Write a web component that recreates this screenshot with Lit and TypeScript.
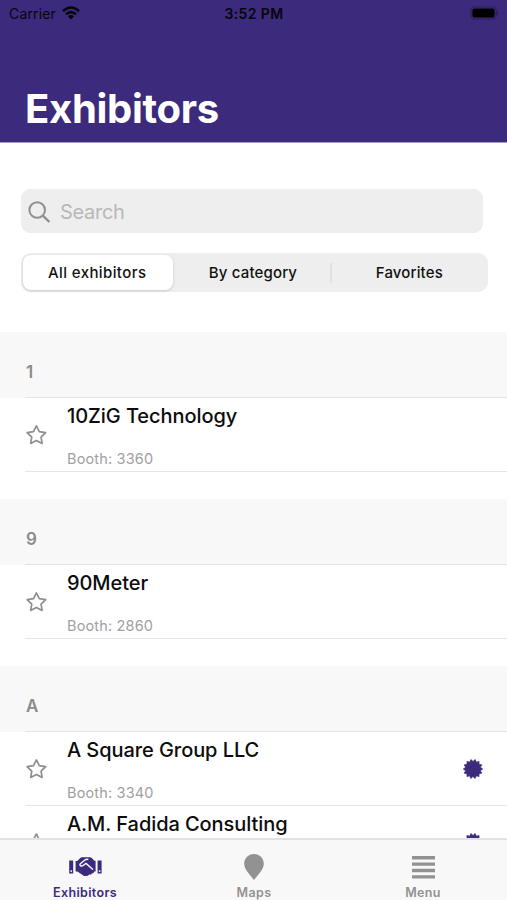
import { LitElement, html, css, svg } from "lit";
import { customElement, property } from "lit/decorators.js";

interface Exhibitor { name: string; booth?: string; featured?: boolean }
interface Group { label: string; items: Exhibitor[] }

const groups: Group[] = [
  { label: "1", items: [{ name: "10ZiG Technology", booth: "3360" }] },
  { label: "9", items: [{ name: "90Meter", booth: "2860" }] },
  {
    label: "A",
    items: [
      { name: "A Square Group LLC", booth: "3340", featured: true },
      { name: "A.M. Fadida Consulting", featured: true },
    ],
  },
];

// Polygon points alternating between two radii, first point straight up.
const burst = (cx: number, cy: number, spikes: number, outer: number, inner: number, turn = 0) =>
  Array.from({ length: spikes * 2 }, (_, i) => {
    const r = i % 2 ? inner : outer;
    const a = (Math.PI * i) / spikes - Math.PI / 2 + turn;
    return `${(cx + r * Math.cos(a)).toFixed(2)},${(cy + r * Math.sin(a)).toFixed(2)}`;
  }).join(" ");

const starPoints = burst(11.4, 11.6, 5, 9.7, 4.9);
const sealPoints = burst(10, 10, 14, 9.7, 7.6, Math.PI / 14);

@customElement("exhibitor-row")
class ExhibitorRow extends LitElement {
  @property({ attribute: false }) item!: Exhibitor;

  static styles = css`
    :host { display: flex; height: 74px; padding-left: 25px; }
    .body { flex: 1; display: flex; border-bottom: 1px solid #e6e6e6; }
    .star { width: 22px; height: 22px; margin: 26px 20px 0 0; }
    .text { flex: 1; display: flex; flex-direction: column; }
    .name { font-size: 20px; line-height: 24px; font-weight: 500; color: #0c0c0c; margin-top: 6px; letter-spacing: -0.07px; white-space: nowrap; }
    .booth { font-size: 14.5px; line-height: 20px; color: #a0a0a0; margin-top: 21px; letter-spacing: 0.16px; }
    .seal { width: 20px; height: 20px; margin: 27px 24px 0 0; }
  `;

  render() {
    const { name, booth, featured } = this.item;
    return html`<div class="body">
      <svg class="star" viewBox="0 0 22 22">
        <polygon points=${starPoints} fill="none" stroke="#8f8f8f" stroke-width="1.7" stroke-linejoin="round" />
      </svg>
      <div class="text">
        <div class="name">${name}</div>
        ${booth ? html`<div class="booth">Booth: ${booth}</div>` : null}
      </div>
      ${featured
        ? html`<svg class="seal" viewBox="0 0 20 20"><polygon points=${sealPoints} fill="#3c2a7c" stroke="#3c2a7c" stroke-width="0.7" stroke-linejoin="round" /></svg>`
        : null}
    </div>`;
  }
}

const handshake = svg`
  <path fill="currentColor" fill-rule="evenodd" d="M.2 3.4H4.2V16.6H.2ZM2.2 13.2a.9 .9 0 1 0 .01 0Z" />
  <path fill="currentColor" fill-rule="evenodd" d="M28.6 3.4H32.6V16.6H28.6ZM30.6 13.2a.9 .9 0 1 0 .01 0Z" />
  <path fill="currentColor" d="M6.6 4H8.3L11.2 .9Q12 .2 13.2 .2H20.8Q22 .2 22.8 1L25.3 3.8H26.6V14.6H25.2Q24.8 16.6 22.8 16.5Q21.9 18.2 20.2 17.6Q18.6 19.6 16.6 18.7Q14.6 19.5 13.2 17.8L8.4 14.6H6.6Z" />
  <path fill="none" stroke="#f8f8f8" stroke-width="1.4" stroke-linecap="round" stroke-linejoin="round" d="M18.8 2.2Q16.6 2.2 15.2 3.5L11.4 6.8Q10.4 8 11.6 8.8Q13 9.5 14.4 8.3L17 6.4L23.6 12.2" />`;

const pin = svg`<path fill="currentColor" d="M10 0C4.4 0 .2 4.3 .2 9.7C.2 15.4 6 20.6 10 26C14 20.6 19.8 15.4 19.8 9.7C19.8 4.3 15.6 0 10 0Z" />`;

const bars = svg`<path fill="currentColor" d="M0 0H23V3.4H0ZM0 6.4H23V9.8H0ZM0 12.8H23V16.2H0ZM0 19.2H23V22.6H0Z" />`;

@customElement("app-root")
class AppRoot extends LitElement {
  static styles = css`
    :host { display: flex; flex-direction: column; height: 900px; overflow: hidden; background: #fff; font-family: Inter, "Liberation Sans", sans-serif; }
    .header { flex: none; height: 142px; background: #3c2a7c; border-bottom: 1px solid #a69dc4; box-sizing: content-box; }
    .status { display: grid; grid-template-columns: 1fr auto 1fr; align-items: center; height: 28px; padding: 0 8px 0 9px; color: #07050d; font-size: 14px; }
    .carrier { display: flex; align-items: center; gap: 6px; letter-spacing: 0.15px; }
    .status span { margin-top: -2px; }
    .wifi { width: 18px; height: 14px; margin-top: -2px; }
    .time { font-weight: 600; letter-spacing: 0.4px; margin: -2px 0 0 0; }
    .battery { width: 29px; height: 14px; justify-self: end; margin-top: -2px; }
    h1 { margin: 56px 0 0 25px; font-size: 40px; line-height: 50px; font-weight: 700; color: #fff; letter-spacing: -0.3px; }
    .tools { flex: none; padding: 46px 0 0 21px; height: 143px; }
    .search { width: 462px; height: 44px; border-radius: 9px; background: #eee; display: flex; align-items: center; color: #b8b8b8; font-size: 20px; letter-spacing: -0.3px; }
    .search span { margin-top: 2px; }
    .glass { width: 22px; height: 22px; margin: 1px 10px 0 7px; }
    .segments { display: grid; grid-template-columns: repeat(3, 1fr); width: 467px; height: 39px; margin-top: 20px; padding: 2px; box-sizing: border-box; border-radius: 10px; background: #eee; font-size: 15px; font-weight: 500; color: #111; letter-spacing: 0.15px; }
    .segment { display: flex; align-items: center; justify-content: center; }
    .segment:last-child { padding-left: 1px; }
    .active { background: #fff; border-radius: 8px; margin-right: 4px; padding-right: 2px; box-shadow: 0 1px 3px rgba(0, 0, 0, 0.16); letter-spacing: 0.4px; }
    .divided { background: linear-gradient(#e1e1e1, #e1e1e1) right center / 2px 20px no-repeat; padding-right: 3px; }
    .list { flex: 1; min-height: 0; overflow: hidden; }
    .group { margin-bottom: 27px; }
    .label { height: 66px; background: linear-gradient(#e4e4e4, #e4e4e4) 25px bottom / 100% 1px no-repeat #f8f8f8; padding: 28px 0 0 26px; box-sizing: border-box; font-size: 17px; line-height: 24px; font-weight: 600; color: #8b8b8b; }
    .tabs { flex: none; height: 62px; box-sizing: border-box; border-top: 2px solid #e2e2e2; background: #f8f8f8; display: grid; grid-template-columns: 1fr 1fr 1fr; }
    .tab { display: flex; flex-direction: column; align-items: center; color: #929292; font-size: 12.5px; line-height: 16px; font-weight: 600; letter-spacing: 0.35px; padding-left: 1px; }
    .tab.on { color: #3c2a7c; }
    .icon { display: flex; align-items: center; height: 28px; margin: 13px 0 4px; }
  `;

  render() {
    return html`
      <div class="header">
        <div class="status">
          <div class="carrier">
            <span>Carrier</span>
            <svg class="wifi" viewBox="0 0 18 14">
              <g fill="none" stroke="#07050d" stroke-width="2.5">
                <path d="M1 5.1Q9-2.2 17 5.1" />
                <path d="M4 8.3Q9 3.9 14 8.3" />
              </g>
              <path fill="#07050d" d="M5.9 10.3Q9 7.7 12.1 10.3L9 13.6Z" />
            </svg>
          </div>
          <div class="time">3:52 PM</div>
          <svg class="battery" viewBox="0 0 29 14">
            <rect x="0.8" y="1" width="25.4" height="12" rx="3.6" fill="none" stroke="#2a1d58" stroke-width="1.1" />
            <rect x="2.4" y="2.6" width="22.2" height="8.8" rx="2" fill="#000" />
            <path d="M27.2 5V9Q28.5 8.4 28.5 7T27.2 5Z" fill="#2a1d58" />
          </svg>
        </div>
        <h1>Exhibitors</h1>
      </div>
      <div class="tools">
        <div class="search">
          <svg class="glass" viewBox="0 0 22 22" fill="none" stroke="#909090" stroke-width="2">
            <circle cx="9.2" cy="9" r="7.8" />
            <path d="M14.6 14.4L21.4 21" stroke-width="2.4" />
          </svg>
          <span>Search</span>
        </div>
        <div class="segments">
          <div class="segment active">All exhibitors</div>
          <div class="segment divided">By category</div>
          <div class="segment">Favorites</div>
        </div>
      </div>
      <div class="list">
        ${groups.map(
          (g) => html`<div class="group">
            <div class="label">${g.label}</div>
            ${g.items.map((item) => html`<exhibitor-row .item=${item}></exhibitor-row>`)}
          </div>`
        )}
      </div>
      <div class="tabs">
        <div class="tab on">
          <div class="icon"><svg width="33" height="20" viewBox="0 0 33 20">${handshake}</svg></div>
          Exhibitors
        </div>
        <div class="tab">
          <div class="icon"><svg width="20" height="26" viewBox="0 0 20 26">${pin}</svg></div>
          Maps
        </div>
        <div class="tab">
          <div class="icon"><svg width="23" height="23" viewBox="0 0 23 23">${bars}</svg></div>
          Menu
        </div>
      </div>
    `;
  }
}
